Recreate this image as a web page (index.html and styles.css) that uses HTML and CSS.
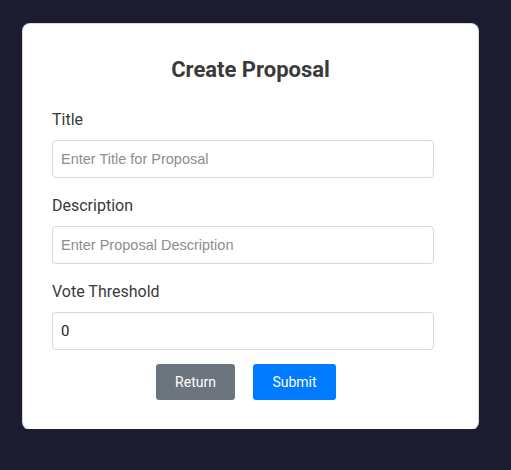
FILE: index.html
```html
<!DOCTYPE html>
<html>
<head>
<meta charset="utf-8">
<link rel="stylesheet" href="styles.css">
</head>
<body>
<div class="card">
  <h1 class="heading">Create Proposal</h1>
  <form class="form">
    <label class="label">Title</label>
    <input class="field" type="text" placeholder="Enter Title for Proposal">
    <label class="label">Description</label>
    <input class="field" type="text" placeholder="Enter Proposal Description">
    <label class="label">Vote Threshold</label>
    <input class="field value" type="text" value="0">
    <div class="actions">
      <button type="button" class="btn btn-grey">Return</button>
      <button type="button" class="btn btn-blue">Submit</button>
    </div>
  </form>
</div>
</body>
</html>
```
FILE: styles.css
```css
html, body {
  margin: 0;
  padding: 0;
  background: #1b1c2f;
  font-family: Roboto, "Liberation Sans", sans-serif;
}
body {
  padding: 24px 0 0 23px;
}
.card {
  box-sizing: border-box;
  width: 455px;
  height: 405px;
  background: #fff;
  border-radius: 7px;
  padding: 0 44px 0 29px;
  box-shadow: 0 0 0 1px #d9d9de;
}
.heading {
  margin: 0;
  padding-top: 33px;
  padding-left: 15px;
  text-align: center;
  font-size: 22px;
  font-weight: 700;
  color: #3a3a3a;
  line-height: 26px;
}
.form {
  display: flex;
  flex-direction: column;
  padding-top: 27px;
}
.label {
  font-size: 16px;
  color: #3a3a3a;
  line-height: 20px;
  margin-bottom: 10px;
}
.field {
  box-sizing: border-box;
  width: 382px;
  height: 38px;
  border: 1px solid #d8d8d8;
  border-radius: 4px;
  padding: 0 8px;
  font-family: Roboto, "Liberation Sans", sans-serif;
  font-size: 15px;
  color: #212529;
  margin-bottom: 18px;
  outline: none;
}
.field::placeholder {
  font-family: "Liberation Sans", Arial, sans-serif;
  font-size: 14.5px;
  color: #8e8e8e;
}
.value {
  margin-bottom: 14px;
}
.actions {
  display: flex;
  justify-content: center;
  gap: 18px;
  padding-left: 6px;
}
.btn {
  height: 36px;
  border: none;
  border-radius: 3px;
  color: #fff;
  font-family: Roboto, "Liberation Sans", sans-serif;
  font-size: 14px;
  padding: 0;
}
.btn-grey {
  width: 79px;
  background: #6c757d;
}
.btn-blue {
  width: 83px;
  background: #007bff;
}
```
